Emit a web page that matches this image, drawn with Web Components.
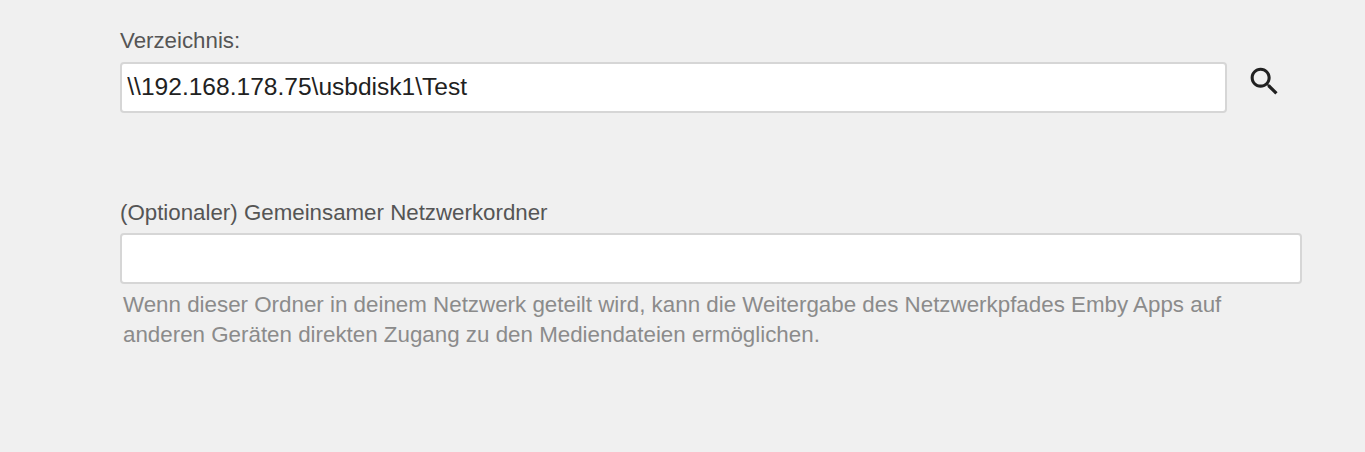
<!DOCTYPE html>
<html lang="de">
<head>
<meta charset="utf-8">
<title>Ordner</title>
<style>
    body {
        margin: 0;
        background-color: #f0f0f0;
        font-family: "Liberation Sans", Arial, sans-serif;
    }
</style>
</head>
<body>
<folder-form>
    <text-field label="Verzeichnis:" value="\\192.168.178.75\usbdisk1\Test">
        <search-button slot="action"></search-button>
    </text-field>
    <text-field label="(Optionaler) Gemeinsamer Netzwerkordner">
        Wenn dieser Ordner in deinem Netzwerk geteilt wird, kann die Weitergabe des Netzwerkpfades Emby Apps auf anderen Geräten direkten Zugang zu den Mediendateien ermöglichen.
    </text-field>
</folder-form>

<template id="folder-form">
<style>
    :host {
        display: flex;
        flex-direction: column;
        gap: 78.6px;
        box-sizing: border-box;
        width: 1365px;
        height: 452px;
        padding: 26.4px 63px 0 120px;
    }
</style>
<slot></slot>
</template>

<template id="text-field">
<style>
    :host {
        display: block;
    }

    .label {
        display: block;
        height: 29.6px;
        margin-bottom: 6px;
        line-height: 30px;
        font-size: 22.3px;
        color: #555;
    }

    .row {
        display: flex;
        align-items: flex-start;
    }

    .input {
        flex: 1;
        min-width: 0;
        box-sizing: border-box;
        height: 51px;
        margin: 0;
        padding: 0 6px 1px 5.3px;
        border: 2px solid #d6d6d6;
        border-radius: 4px;
        outline: none;
        background-color: #fff;
        font-family: inherit;
        font-size: 24.55px;
        color: #212121;
    }

    .description {
        padding: 6px 3px 0;
        line-height: 30px;
        font-size: 22.35px;
        color: #8b8b8b;
    }
</style>
<label class="label" for="input"></label>
<div class="row">
    <input class="input" id="input" type="text" spellcheck="false">
    <slot name="action"></slot>
</div>
<div class="description"><slot></slot></div>
</template>

<template id="search-button">
<style>
    :host {
        display: block;
        width: 75px;
    }

    .button {
        display: block;
        margin: 1px 0 0 19px;
        padding: 0;
        border: none;
        background: none;
        cursor: pointer;
    }

    .button-img {
        display: block;
        width: 37px;
        height: 37px;
        fill: #212121;
    }
</style>
<button class="button" type="button" aria-label="Suchen">
    <svg class="button-img" viewBox="0 0 24 24">
        <path d="M15.5 14h-.79l-.28-.27C15.41 12.59 16 11.11 16 9.5 16 5.91 13.09 3 9.5 3S3 5.91 3 9.5 5.91 16 9.5 16c1.61 0 3.09-.59 4.23-1.57l.27.28v.79l5 4.99L20.49 19l-4.99-5zm-6 0C7.01 14 5 11.99 5 9.5S7.01 5 9.5 5 14 7.01 14 9.5 11.99 14 9.5 14z"/>
    </svg>
</button>
</template>

<script>
function attachTemplate(element, id) {
    const template = document.getElementById(id);
    element.attachShadow({ mode: 'open' });
    element.shadowRoot.appendChild(template.content.cloneNode(true));
}

class FolderForm extends HTMLElement {
    constructor() {
        super();
        attachTemplate(this, 'folder-form');
    }
}

class TextField extends HTMLElement {
    constructor() {
        super();
        attachTemplate(this, 'text-field');
    }

    connectedCallback() {
        this.shadowRoot.querySelector('.label').textContent = this.getAttribute('label');
        this.shadowRoot.querySelector('.input').value = this.getAttribute('value') || '';
    }
}

class SearchButton extends HTMLElement {
    constructor() {
        super();
        attachTemplate(this, 'search-button');
    }
}

customElements.define('folder-form', FolderForm);
customElements.define('text-field', TextField);
customElements.define('search-button', SearchButton);
</script>
</body>
</html>
